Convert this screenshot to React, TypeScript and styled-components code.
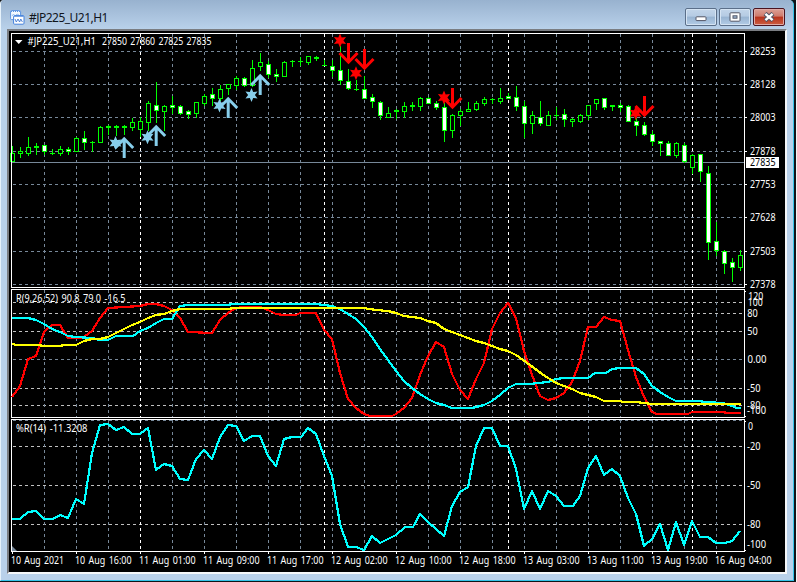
import React from "react";
import styled, { createGlobalStyle } from "styled-components";

const GlobalStyle = createGlobalStyle`
  html, body { margin: 0; padding: 0; background: #fff; overflow: hidden; }
  * { box-sizing: border-box; }
`;

const Desktop = styled.div`
  width: 797px;
  height: 582px;
  background: #101418;
  border-right: 1px solid #f4f4f4;
`;

const WindowFrame = styled.section`
  width: 794px;
  height: 581px;
  display: flex;
  flex-direction: column;
  background: #b9d1ea;
  border-left: 1px solid #e6f2fb;
  border-right: 1px solid #35c3e8;
  border-bottom: 1px solid #35c3e8;
  border-radius: 4px 5px 0 0;
  overflow: hidden;
  font-family: "Noto Sans", "Open Sans", sans-serif;
`;

const TitleBar = styled.header`
  height: 29px;
  flex: none;
  display: flex;
  align-items: flex-start;
  padding: 8px 8px 0 9px;
  background: linear-gradient(#98b2cf, #b9d1ea);
`;

const Title = styled.h1`
  margin: 0 auto 0 4px;
  font-size: 12px;
  line-height: 19px;
  font-weight: 400;
  color: #10151c;
  letter-spacing: -0.52px;
`;

const AppIcon = styled.svg`
  width: 15px;
  height: 16px;
  margin-top: 1px;
`;

const Controls = styled.div`
  display: flex;
  gap: 2px;
`;

const ControlButton = styled.button<{ $danger?: boolean }>`
  width: 32px;
  height: 18px;
  padding: 0;
  display: grid;
  place-items: center;
  border: 1px solid ${(p) => (p.$danger ? "#4a1420" : "#5b6f89")};
  border-radius: 2px;
  box-shadow: inset 0 0 0 1px ${(p) => (p.$danger ? "#e0aaa5" : "#d5e4f3")};
  background: ${(p) =>
    p.$danger
      ? "linear-gradient(#dba096 0%, #cf7b6c 45%, #b8321c 50%, #cc5e42 100%)"
      : "linear-gradient(#c3d6ea 0%, #b5cbe3 45%, #98b4d2 50%, #b3cce6 100%)"};
`;

const Client = styled.main`
  flex: none;
  width: 780px;
  height: 545px;
  margin-left: 6px;
  display: flex;
  flex-direction: column;
  background: #000;
  border: 2px solid;
  border-color: #7a7d82 #f5f7f9 #f5f7f9 #7a7d82;
`;

const Panel = styled.svg<{ $height: number }>`
  display: block;
  flex: none;
  width: 776px;
  height: ${(p) => p.$height}px;
  overflow: visible;
  text {
    font-family: "Noto Sans", "Open Sans", sans-serif;
    font-size: 10px;
    word-spacing: 1.2px;
    fill: #fff;
    white-space: pre;
  }
`;

const SLATE = "#778899";
const SILVER = "#c0c0c0";
const LIME = "#00ff00";

const gridX = Array.from({ length: 22 }, (_, i) => 44 + 32 * i).filter((x) => x !== 140);
const dayX = [140, 324, 508, 692];

type Label = [text: string, x: number, y: number, width: number];

function Caption({ items }: { items: Label[] }) {
  return (
    <>
      {items.map(([t, x, y, w], i) => (
        <text key={i} x={x} y={y} textLength={w} lengthAdjust="spacingAndGlyphs">
          {t}
        </text>
      ))}
    </>
  );
}

function Grid({ top, bottom, rows }: { top: number; bottom: number; rows: [number, string][] }) {
  return (
    <g shapeRendering="crispEdges" strokeDasharray="3 3" strokeWidth={1}>
      {rows.map(([y, c]) => (
        <path key={y} d={`M13 ${y + 0.5}H744`} stroke={c} />
      ))}
      {gridX.map((x) => (
        <path key={x} d={`M${x + 0.5} ${top + 1}V${bottom}`} stroke={SLATE} />
      ))}
      {dayX.map((x) => (
        <path key={x} d={`M${x + 0.5} ${top + 1}V${bottom}`} stroke="#fff" />
      ))}
    </g>
  );
}

function Border({ top, bottom }: { top: number; bottom: number }) {
  return (
    <rect x={11.5} y={top + 0.5} width={733} height={bottom - top} fill="none" stroke="#fff" shapeRendering="crispEdges" />
  );
}

// kind: h = hollow body, w = filled body, t = one pixel tick, k = two pixel tick
type Candle = [high: number, low: number, top: number, bottom: number, kind: "h" | "w" | "t" | "k"];

const candles: Candle[] = [
  [146, 161, 153, 161, "h"], [147, 157, 151, 153, "h"], [137, 155, 147, 153, "h"], [143, 154, 146, 147, "k"],
  [145, 154, 145, 151, "w"], [149, 154, 153, 153, "t"], [146, 155, 149, 153, "h"], [147, 154, 149, 151, "w"],
  [137, 151, 138, 151, "h"], [131, 149, 138, 142, "w"], [141, 151, 142, 142, "t"], [126, 142, 127, 142, "h"],
  [125, 134, 126, 127, "k"], [125, 135, 126, 127, "k"], [125, 134, 126, 127, "k"], [118, 130, 122, 127, "h"],
  [117, 136, 121, 129, "h"], [101, 130, 103, 122, "h"], [82, 122, 105, 110, "w"], [105, 130, 106, 111, "h"],
  [96, 113, 105, 107, "w"], [105, 114, 106, 113, "w"], [110, 118, 111, 114, "w"], [102, 117, 102, 113, "h"],
  [94, 105, 96, 103, "h"], [88, 105, 94, 98, "w"], [85, 100, 89, 98, "h"], [84, 94, 84, 88, "h"],
  [76, 89, 78, 85, "h"], [77, 86, 78, 85, "w"], [60, 86, 68, 85, "h"], [53, 70, 62, 66, "h"],
  [61, 77, 64, 74, "w"], [69, 81, 74, 76, "w"], [61, 76, 62, 76, "h"], [60, 66, 61, 61, "t"],
  [57, 65, 61, 61, "t"], [56, 64, 56, 62, "h"], [56, 60, 57, 58, "k"], [60, 65, 65, 65, "t"],
  [60, 76, 66, 70, "w"], [46, 84, 70, 80, "w"], [69, 89, 81, 88, "w"], [80, 90, 89, 89, "t"],
  [76, 98, 89, 98, "w"], [94, 107, 97, 101, "w"], [101, 119, 102, 115, "w"], [107, 117, 113, 117, "h"],
  [109, 118, 110, 111, "k"], [102, 117, 106, 111, "h"], [102, 110, 105, 106, "k"], [97, 110, 98, 106, "h"],
  [97, 103, 98, 103, "w"], [101, 109, 103, 107, "w"], [103, 141, 107, 130, "w"], [114, 137, 115, 130, "h"],
  [109, 125, 111, 115, "h"], [102, 111, 109, 111, "h"], [101, 110, 103, 109, "h"], [97, 105, 99, 103, "h"],
  [98, 103, 99, 99, "t"], [88, 103, 98, 101, "h"], [93, 98, 96, 98, "w"], [86, 110, 97, 106, "w"],
  [101, 137, 106, 123, "w"], [111, 133, 115, 123, "h"], [101, 125, 117, 123, "w"], [111, 125, 115, 125, "h"],
  [107, 119, 115, 115, "t"], [109, 126, 114, 119, "w"], [118, 126, 119, 121, "h"], [114, 122, 115, 121, "h"],
  [105, 119, 105, 115, "h"], [99, 109, 99, 103, "h"], [98, 109, 98, 107, "w"], [105, 110, 105, 106, "k"],
  [103, 111, 105, 107, "w"], [105, 121, 106, 121, "w"], [118, 135, 121, 125, "w"], [122, 135, 125, 134, "w"],
  [131, 145, 134, 141, "w"], [141, 155, 141, 143, "w"], [141, 155, 143, 155, "w"], [142, 157, 143, 155, "h"],
  [143, 162, 145, 161, "w"], [154, 173, 155, 167, "h"], [154, 181, 154, 171, "w"], [166, 259, 173, 242, "w"],
  [222, 255, 241, 250, "w"], [250, 273, 251, 263, "w"], [258, 281, 262, 267, "w"], [250, 270, 255, 267, "h"],
];

function Candles() {
  return (
    <g shapeRendering="crispEdges">
      {candles.map(([hi, lo, top, bot, kind], i) => {
        const x = 12 + 8 * i;
        const solid = kind === "t" || kind === "k";
        return (
          <g key={i}>
            <path d={`M${x + 0.5} ${hi}V${lo + 1}`} stroke={LIME} />
            {solid ? (
              <rect x={x - 2} y={top} width={5} height={bot - top + 1} fill={LIME} />
            ) : (
              <rect x={x - 1.5} y={top + 0.5} width={4} height={bot - top} stroke={LIME} fill={kind === "w" ? "#fff" : "#000"} />
            )}
          </g>
        );
      })}
    </g>
  );
}

function Arrow({ x, y, up }: { x: number; y: number; up?: boolean }) {
  const d = up
    ? `M${x} ${y + 21}V${y + 2}M${x - 9} ${y + 11}L${x} ${y + 1.8}L${x + 9} ${y + 11}`
    : `M${x} ${y - 21}V${y - 2}M${x - 9} ${y - 11}L${x} ${y - 1.8}L${x + 9} ${y - 11}`;
  return <path d={d} fill="none" stroke={up ? SKY : RED} strokeWidth={3} />;
}

function Star({ x, y, color }: { x: number; y: number; color: string }) {
  const pts = Array.from({ length: 12 }, (_, i) => {
    const a = (i * Math.PI) / 6 - Math.PI / 2;
    const r = i % 2 ? 3.4 : 7;
    return `${(x + r * Math.cos(a)).toFixed(2)},${(y + r * Math.sin(a)).toFixed(2)}`;
  });
  return <polygon points={pts.join(" ")} fill={color} />;
}

const SKY = "#87ceeb";
const RED = "#ff0000";
const upArrows = [[124.2, 137], [156.2, 125], [228.2, 97], [260.2, 74]];
const downArrows = [[348.5, 64], [364.5, 70], [452.5, 109], [644.5, 117]];
const upStars = [[115.5, 143], [147.5, 137.3], [219.5, 105.5], [251.5, 95]];
const downStars = [[340, 40.5], [356, 73.3], [444, 97.5], [635.7, 113.3]];

const priceRows: [number, string][] = [51, 84, 117, 151, 184, 217, 251, 284].map((y) => [y, SLATE]);
const priceText = ["28253", "28128", "28003", "27878", "27753", "27628", "27503", "27378"];

const redLine = "12,397 20,386 28,359 36,356 44,332 52,325 60,325 68,338 80,338 84,337 92,331 100,318 108,308 124,307 140,306 148,304 156,304 164,306 172,310 180,318 188,332 212,333 220,320 228,313 236,308 244,307 260,307 268,310 276,314 284,315 296,315 300,313 316,313 324,330 332,339 340,373 348,399 356,408 364,414 370,416 392,416 396,414 404,408 412,398 420,375 428,356 436,342 444,347 452,374 460,390 468,399 476,379 484,363 492,329 500,313 508,303 516,318 524,351 532,375 540,396 548,400 556,398 564,393 572,382 580,361 588,327 596,327 604,317 612,320 620,321 628,350 636,377 644,397 652,412 657,414 688,414 692,412 723,412 727,413 741,413";
const cyanLine = "12,318 28,318 36,320 44,324 52,329 60,332 68,336 76,337 92,338 100,340 108,340 116,336 133,336 140,331 148,328 156,323 164,319 172,319 180,306 188,305 228,305 232,304 316,304 324,305 332,306 340,309 348,314 356,319 364,327 372,337 380,349 388,360 396,371 404,381 412,388 420,394 428,399 436,403 444,405 452,408 472,408 484,405 492,401 500,395 508,388 516,384 530,384 538,383 548,382 556,379 564,378 588,378 595,373 606,373 612,369 620,368 636,368 644,374 652,386 660,392 668,397 676,401 700,401 704,402 723,403 732,406 737,408 741,408";
const yellowLine = "12,344 17,345 36,345 46,346 60,346 64,345 76,345 84,341 92,339 100,339 108,337 116,333 124,329 132,325 140,322 148,318 156,315 164,314 172,311 180,309 229,309 233,308 363,308 376,310 388,311 396,313 404,316 412,317 420,318 428,321 436,323 444,329 460,335 476,341 484,343 492,346 500,349 508,351 516,355 530,365 542,374 556,383 572,389 580,393 588,395 596,397 604,401 620,401 623,402 636,402 652,404 741,404";
const percentLine = "12,519 20,519 28,512 36,511 44,519 53,519 60,515 68,518 76,499 84,504 92,453 100,425 108,424 116,430 124,427 132,434 140,434 148,428 156,470 164,464 172,466 180,479 188,480 196,459 204,450 212,459 220,437 228,425 236,426 244,441 252,436 260,436 268,456 276,466 284,439 292,437 301,437 308,428 316,434 324,456 332,476 340,524 348,547 356,547 364,550 372,536 380,543 388,539 396,535 405,527 413,527 420,514 428,522 444,536 452,506 460,492 468,487 476,446 484,428 492,428 500,446 508,446 516,469 524,509 532,491 540,509 548,491 556,496 564,506 573,506 580,496 588,468 596,456 604,475 612,469 620,476 628,498 636,514 644,546 652,539 660,524 668,550 676,522 684,545 692,521 700,537 708,537 716,543 725,543 732,541 740,531";

const times = ["10 Aug 2021", "10 Aug 16:00", "11 Aug 01:00", "11 Aug 09:00", "11 Aug 17:00", "12 Aug 02:00", "12 Aug 10:00", "12 Aug 18:00", "13 Aug 03:00", "13 Aug 11:00", "13 Aug 19:00", "16 Aug 04:00"];

function Series({ points, color }: { points: string; color: string }) {
  return <polyline points={points} fill="none" stroke={color} strokeWidth={2.2} strokeLinejoin="round" shapeRendering="crispEdges" />;
}

function PricePanel() {
  return (
    <Panel $height={257} viewBox="9 31 776 257">
      <Grid top={33} bottom={287} rows={priceRows} />
      <path d="M12 162.5H744" stroke={SLATE} shapeRendering="crispEdges" />
      <Candles />
      {upStars.map(([x, y]) => <Star key={x} x={x} y={y} color={SKY} />)}
      {upArrows.map(([x, y]) => <Arrow key={x} x={x} y={y} up />)}
      {downStars.map(([x, y]) => <Star key={x} x={x} y={y} color={RED} />)}
      {downArrows.map(([x, y]) => <Arrow key={x} x={x} y={y} />)}
      <Border top={33} bottom={287} />
      {priceRows.map(([y]) => <path key={y} d={`M745 ${y + 0.5}h2`} stroke="#fff" shapeRendering="crispEdges" />)}
      <path d="M15 40h7.5l-3.75 4z" fill="#fff" />
      <Caption items={[["#JP225_U21,H1", 27.5, 45, 68.5], ["27850 27860 27825 27835", 102, 45, 109.5]]} />
      <Caption items={priceText.map((t, i): Label => [t, 750, priceRows[i][0] + 4, 25.5])} />
      <rect x={746} y={157} width={33} height={11} fill="#fff" />
      <text x={750} y={166} textLength={25.5} lengthAdjust="spacingAndGlyphs" style={{ fill: "#000" }}>27835</text>
    </Panel>
  );
}

function RangePanel() {
  return (
    <Panel $height={130} viewBox="9 288 776 130">
      <Grid top={289} bottom={417} rows={[[302, SILVER], [313, SILVER], [331, SILVER], [359, SLATE], [388, SILVER], [405, SILVER]]} />
      <Border top={289} bottom={417} />
      <Series points={redLine} color={RED} />
      <Series points={cyanLine} color="#00ffff" />
      <Series points={yellowLine} color="#ffff00" />
      <path d="M745 291.5h1M745 416.5h1" stroke="#fff" />
      <Caption items={[
        ["R(9,26,52) 90.8 79.0 -16.5", 16, 302, 109.5],
        ["120", 748.3, 300, 15], ["100", 747.7, 306, 15], ["80", 747.3, 317, 10.5], ["50", 747.3, 335, 10.5],
        ["0.00", 747.5, 363, 19], ["-50", 747, 392, 13.5], ["-80", 747, 409, 13.5], ["-100", 747, 414, 19],
      ]} />
    </Panel>
  );
}

function PercentPanel() {
  return (
    <Panel $height={154} viewBox="9 418 776 154">
      <Grid top={419} bottom={551} rows={[[420, SLATE], [446, SILVER], [485, SILVER], [524, SILVER]]} />
      <path d="M12 546v5h5z" fill={SLATE} />
      <Border top={419} bottom={551} />
      <Series points={percentLine} color="#00ffff" />
      <path d="M745 421.5h1M745 550.5h1" stroke="#fff" />
      {times.map((t, i) => <path key={t} d={`M${12.5 + 64 * i} 552v2`} stroke="#fff" shapeRendering="crispEdges" />)}
      <Caption items={[
        ["%R(14) -11.3208", 16, 432, 71.5],
        ["0", 748, 430, 5], ["-20", 747, 450, 13.5], ["-50", 747, 489, 13.5], ["-80", 747, 528, 13.5], ["-100", 747, 548, 19],
      ]} />
      <Caption items={times.map((t, i): Label => [t, 11 + 64 * i, 564, i ? 56.5 : 53])} />
    </Panel>
  );
}

function MinimizeGlyph() {
  return (
    <svg width="12" height="10" viewBox="0 0 12 10">
      <rect x="1" y="4.8" width="10" height="3.8" rx="0.8" fill="#fff" stroke="#535666" />
    </svg>
  );
}

function MaximizeGlyph() {
  return (
    <svg width="12" height="10" viewBox="0 0 12 10">
      <rect x="1" y="0.8" width="10" height="8.4" rx="0.8" fill="#fff" stroke="#535666" />
      <rect x="4" y="3.8" width="4" height="2.4" fill="#9fbad6" stroke="#535666" />
    </svg>
  );
}

function CloseGlyph() {
  return (
    <svg width="14" height="10" viewBox="0 0 14 10">
      <path d="M3 1.5l8 7M11 1.5l-8 7" stroke="#535666" strokeWidth="4.4" />
      <path d="M3.4 1.8l7.2 6.4M10.6 1.8l-7.2 6.4" stroke="#fff" strokeWidth="2.4" />
    </svg>
  );
}

export default function App() {
  return (
    <Desktop>
      <GlobalStyle />
      <WindowFrame>
        <TitleBar>
          <AppIcon viewBox="0 0 15 16">
            <rect x="0.6" y="1.6" width="10" height="9" rx="1" fill="#f4faff" stroke="#5b93e0" />
            <path d="M1 2.5h9.5" stroke="#5b93e0" strokeDasharray="1 1" />
            <path d="M2 7l1.5-2L5 7l2-2 2 1" fill="none" stroke="#8ab4ec" strokeWidth="0.8" />
            <rect x="3.6" y="6.6" width="10.4" height="8.6" rx="1" fill="#fff" stroke="#4583dc" />
            <path d="M4 7.2h9.6" stroke="#4583dc" />
            <path d="M5 10l1.3 3L8 10l1.6 3 1.2-3 1.6 3" fill="none" stroke="#3f78d0" strokeWidth="0.9" />
          </AppIcon>
          <Title>#JP225_U21,H1</Title>
          <Controls>
            <ControlButton aria-label="Minimize"><MinimizeGlyph /></ControlButton>
            <ControlButton aria-label="Maximize"><MaximizeGlyph /></ControlButton>
            <ControlButton aria-label="Close" $danger><CloseGlyph /></ControlButton>
          </Controls>
        </TitleBar>
        <Client>
          <PricePanel />
          <RangePanel />
          <PercentPanel />
        </Client>
      </WindowFrame>
    </Desktop>
  );
}
